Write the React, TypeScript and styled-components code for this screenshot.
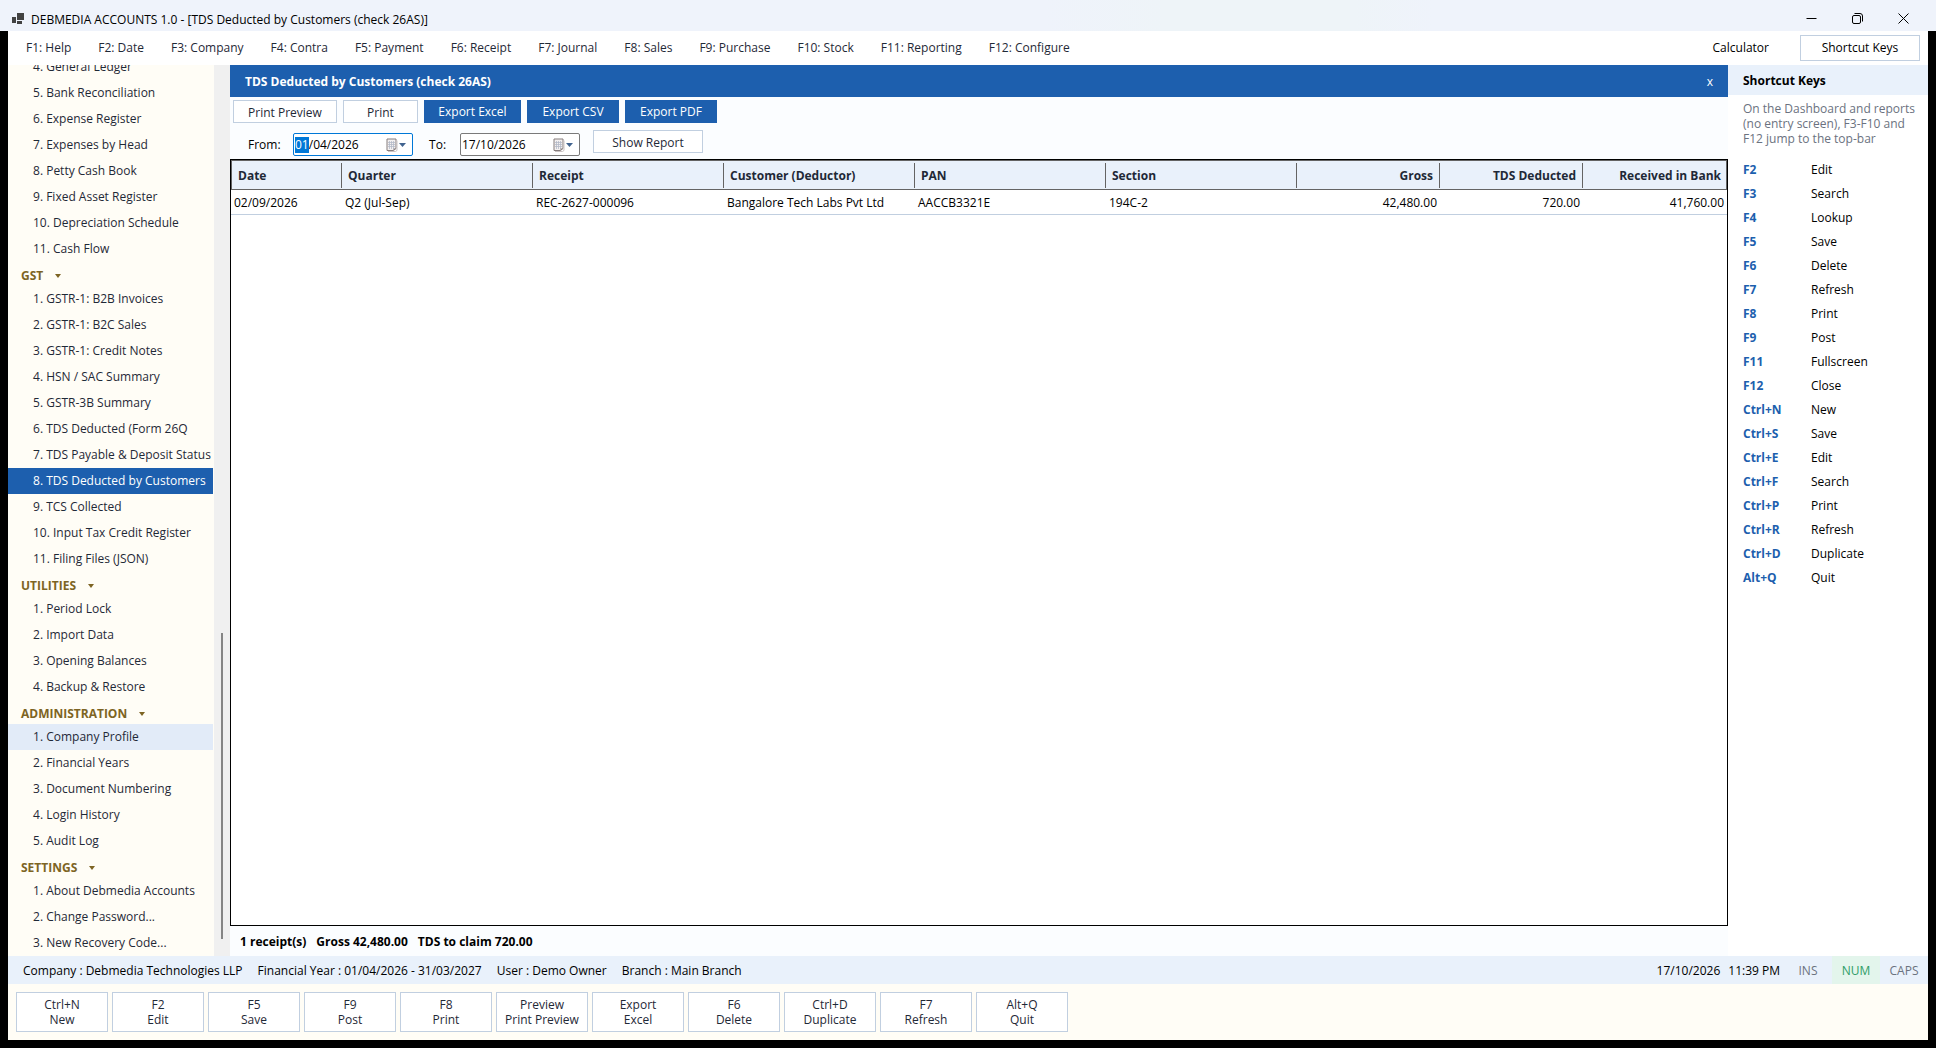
import React, { useState } from "react";
import styled, { createGlobalStyle, css } from "styled-components";

const color = {
  blue: "#1d5fae",
  pale: "#e9f1fb",
  cream: "#fffdf6",
  line: "#c1cfe0",
  ink: "#1f2937",
  muted: "#6b7280",
  surface: "#fbfdff",
};

const Global = createGlobalStyle`
  * { box-sizing: border-box; }
  html, body, #root { height: 100%; margin: 0; }
  body {
    background: #000;
    color: #000;
    font: 12px/15px "Open Sans", "Noto Sans", sans-serif;
    overflow: hidden;
  }
  button, input { font: inherit; color: inherit; }
  button { cursor: pointer; }
`;

const Window = styled.div`
  display: flex;
  flex-direction: column;
  height: 100vh;
`;

const TitleBar = styled.header`
  display: flex;
  align-items: center;
  height: 31px;
  flex: none;
  padding: 6px 10px 0 12px;
  background: linear-gradient(90deg, #eff3fb 54%, #eef4f8 60%, #eef4f8 70%, #eff3fb 74%);
`;

const Title = styled.h1`
  margin: 0 auto 0 7px;
  padding-top: 2px;
  font-size: 12px;
  font-weight: 400;
`;

const WindowButton = styled.button`
  display: flex;
  align-items: center;
  justify-content: center;
  width: 46px;
  height: 24px;
  padding: 0;
  border: 0;
  background: none;
`;

const Client = styled.div`
  display: flex;
  flex-direction: column;
  flex: 1;
  min-height: 0;
  margin: 0 8px 8px;
  background: #fff;
`;

const MenuBar = styled.nav`
  display: flex;
  align-items: center;
  gap: 1px;
  height: 34px;
  flex: none;
  padding: 0 8px 0 5px;
`;

const MenuItem = styled.button`
  padding: 3px 13px 5px;
  border: 0;
  background: none;
  color: ${color.ink};
  white-space: nowrap;
`;

const Calculator = styled(MenuItem)`
  margin-left: auto;
  margin-right: 17px;
  color: #000;
`;

const KeysToggle = styled.button`
  width: 120px;
  height: 26px;
  padding: 0 0 2px;
  border: 1px solid ${color.line};
  background: #fff;
`;

const Body = styled.div`
  display: flex;
  flex: 1;
  min-height: 0;
`;

const Sidebar = styled.nav`
  display: flex;
  flex-direction: column;
  justify-content: flex-end;
  width: 206px;
  flex: none;
  overflow: hidden;
  background: ${color.cream};
`;

const GroupHeading = styled.button`
  display: flex;
  align-items: center;
  gap: 12px;
  height: 24px;
  flex: none;
  width: 100%;
  padding: 3px 13px 0;
  border: 0;
  background: none;
  color: #7d6423;
  font-weight: 700;
`;

const Caret = styled.span`
  border: 3px solid transparent;
  border-top: 4px solid currentColor;
  border-bottom: 0;
`;

const NavItem = styled.button<{ $state?: "active" | "hover" }>`
  display: block;
  height: 26px;
  flex: none;
  width: 205px;
  padding: 0 0 2px 25px;
  border: 0;
  background: none;
  color: ${color.ink};
  text-align: left;
  white-space: nowrap;
  ${({ $state }) => $state === "active" && css`background: ${color.blue}; color: #fff;`}
  ${({ $state }) => $state === "hover" && css`background: #e2ebf8;`}
`;

const ScrollTrack = styled.div`
  display: flex;
  flex-direction: column;
  align-items: center;
  justify-content: flex-end;
  width: 16px;
  flex: none;
  padding-bottom: 17px;
  background: #f0f0f0;
`;

const ScrollThumb = styled.div`
  width: 2px;
  height: 35%;
  background: #858585;
`;

const Main = styled.main`
  display: flex;
  flex-direction: column;
  flex: 1;
  min-width: 0;
  background: ${color.surface};
`;

const ReportHeader = styled.div`
  display: flex;
  align-items: center;
  justify-content: space-between;
  height: 32px;
  flex: none;
  padding: 0 13px 0 15px;
  background: ${color.blue};
  color: #fff;
`;

const Heading = styled.h2`
  margin: 0;
  font-size: 12px;
  font-weight: 700;
`;

const CloseReport = styled.button`
  padding: 2px;
  border: 0;
  background: none;
`;

const Toolbar = styled.div`
  display: flex;
  gap: 6px;
  padding: 3px;
`;

const ToolButton = styled.button<{ $primary?: boolean; $width: number }>`
  width: ${({ $width }) => $width}px;
  height: 23px;
  padding: ${({ $primary }) => ($primary ? "0" : "1px 0 0")};
  border: 1px solid ${({ $primary }) => ($primary ? color.blue : color.line)};
  background: ${({ $primary }) => ($primary ? color.blue : "#fff")};
  color: ${({ $primary }) => ($primary ? "#fff" : color.ink)};
  white-space: nowrap;
`;

const Filters = styled.form`
  display: flex;
  align-items: flex-start;
  gap: 13px;
  padding: 4px 18px 3px;
`;

const FilterLabel = styled.label`
  display: flex;
  align-items: center;
  padding-top: 3px;
`;

const LabelText = styled.span<{ $width: number }>`
  width: ${({ $width }) => $width}px;
`;

const DateBox = styled.span<{ $focused?: boolean }>`
  display: flex;
  align-items: center;
  width: 120px;
  height: 23px;
  padding: 0 6px 0 1px;
  border: 1px solid ${({ $focused }) => ($focused ? "#0078d7" : "#7a7a7a")};
  border-radius: 2px;
  background: #fff;
`;

const DateSelection = styled.span`
  padding: 0 0 1px;
  background: #0078d7;
  color: #fff;
`;

const DateInput = styled.input`
  flex: 1;
  min-width: 0;
  padding: 0;
  border: 0;
  outline: 0;
  background: none;
`;

const TableFrame = styled.div`
  flex: 1;
  min-height: 0;
  border: 1px solid #000;
  background: #fff;
`;

const Table = styled.table`
  width: 100%;
  border-collapse: separate;
  border-spacing: 0;
  table-layout: fixed;
`;

const HeadCell = styled.th<{ $right?: boolean }>`
  height: 30px;
  padding: 0;
  border-top: 1px solid #646464;
  border-bottom: 1px solid #646464;
  background: ${color.pale};
  color: ${color.ink};
  font-weight: 700;
  text-align: ${({ $right }) => ($right ? "right" : "left")};
  &:first-child { border-left: 1px solid #646464; }
  &:last-child { border-right: 1px solid #646464; }
`;

const HeadText = styled.div`
  margin: 2px 0 1px;
  padding: 5px 6px;
  border-right: 1px solid #646464;
  th:last-child > & { border-right-color: transparent; padding-right: 4px; }
`;

const Cell = styled.td<{ $right?: boolean }>`
  height: 25px;
  padding: 0 3px;
  border-bottom: 1px solid ${color.line};
  text-align: ${({ $right }) => ($right ? "right" : "left")};
  white-space: nowrap;
`;

const Totals = styled.div`
  display: flex;
  align-items: center;
  gap: 10px;
  height: 30px;
  flex: none;
  padding: 0 10px;
  font-weight: 700;
`;

const KeysPanel = styled.aside`
  width: 200px;
  flex: none;
  background: #fff;
`;

const KeysHeading = styled(Heading)`
  height: 30px;
  padding: 8px 15px;
  background: ${color.pale};
`;

const Note = styled.p`
  margin: 6px 10px 16px 15px;
  color: ${color.muted};
`;

const KeyList = styled.dl`
  display: grid;
  grid-template-columns: 68px 1fr;
  grid-auto-rows: 24px;
  margin: 0;
  padding-left: 15px;
`;

const KeyName = styled.dt`
  color: ${color.blue};
  font-weight: 700;
`;

const KeyAction = styled.dd`
  margin: 0;
`;

const StatusBar = styled.footer`
  display: flex;
  align-items: center;
  gap: 15px;
  height: 28px;
  flex: none;
  padding-left: 15px;
  background: ${color.pale};
`;

const StatusRight = styled.div`
  display: flex;
  align-items: center;
  height: 100%;
  margin-left: auto;
`;

const Clock = styled.div`
  display: flex;
  gap: 8px;
  margin-right: 4px;
`;

const Lock = styled.span<{ $on?: boolean }>`
  display: flex;
  align-items: center;
  justify-content: center;
  width: 48px;
  height: 100%;
  background: ${({ $on }) => ($on ? "#e3f5ec" : "transparent")};
  color: ${({ $on }) => ($on ? "#2f9e68" : color.muted)};
`;

const ActionBar = styled.div`
  display: flex;
  gap: 4px;
  flex: none;
  padding: 8px;
  background: ${color.cream};
`;

const ActionButton = styled.button`
  display: flex;
  flex-direction: column;
  align-items: center;
  justify-content: center;
  width: 92px;
  height: 40px;
  padding: 0;
  border: 1px solid ${color.line};
  background: #fff;
  color: ${color.ink};
  white-space: nowrap;
`;

const AppIcon = () => (
  <svg width="12" height="12" viewBox="0 0 12 12" fill="#424242" aria-hidden="true">
    <rect x="0" y="4" width="4" height="6" />
    <rect x="5" y="0" width="7" height="7" />
    <rect x="5" y="8" width="5" height="3" />
  </svg>
);

const MinimizeIcon = () => (
  <svg width="11" height="11" viewBox="0 0 11 11" fill="none" stroke="#000" aria-hidden="true">
    <path d="M0.5 5.5h10" />
  </svg>
);

const RestoreIcon = () => (
  <svg width="11" height="11" viewBox="0 0 11 11" fill="none" stroke="#000" aria-hidden="true">
    <rect x="0.5" y="2.5" width="8" height="8" rx="1.5" />
    <path d="M2.5 0.5h5.500a2.500 2.500 0 0 1 2.500 2.500v5.500" />
  </svg>
);

const CloseIcon = () => (
  <svg width="11" height="11" viewBox="0 0 11 11" fill="none" stroke="#000" aria-hidden="true">
    <path d="M0.5 0.5l10 10M10.5 0.5l-10 10" />
  </svg>
);

const CalendarIcon = () => (
  <svg width="21" height="14" viewBox="0 0 21 14" aria-hidden="true">
    <path d="M2 1h9v9.500l-2.500 2h-6.500z" fill="#f3f0f0" stroke="#857c7d" />
    <path d="M3 4.500h7M3 6.500h7M3 8.500h7M4.500 3v8M6.500 3v8M8.500 3v8" stroke="#b4bac8" strokeWidth="0.8" />
    <path d="M8.500 12.500v-2h2.500z" fill="#857c7d" />
    <path d="M12 2.500v10l-1.500 1h-7.500" fill="none" stroke="#c9c2c2" />
    <path d="M14 5h7l-3.500 4z" fill="#41638f" />
  </svg>
);

const menu = [
  "F1: Help", "F2: Date", "F3: Company", "F4: Contra", "F5: Payment", "F6: Receipt",
  "F7: Journal", "F8: Sales", "F9: Purchase", "F10: Stock", "F11: Reporting", "F12: Configure",
];

const groups: { name?: string; first: number; items: string[] }[] = [
  {
    first: 4,
    items: [
      "General Ledger", "Bank Reconciliation", "Expense Register", "Expenses by Head",
      "Petty Cash Book", "Fixed Asset Register", "Depreciation Schedule", "Cash Flow",
    ],
  },
  {
    name: "GST",
    first: 1,
    items: [
      "GSTR-1: B2B Invoices", "GSTR-1: B2C Sales", "GSTR-1: Credit Notes", "HSN / SAC Summary",
      "GSTR-3B Summary", "TDS Deducted (Form 26Q", "TDS Payable & Deposit Status",
      "TDS Deducted by Customers", "TCS Collected", "Input Tax Credit Register", "Filing Files (JSON)",
    ],
  },
  { name: "UTILITIES", first: 1, items: ["Period Lock", "Import Data", "Opening Balances", "Backup & Restore"] },
  {
    name: "ADMINISTRATION",
    first: 1,
    items: ["Company Profile", "Financial Years", "Document Numbering", "Login History", "Audit Log"],
  },
  { name: "SETTINGS", first: 1, items: ["About Debmedia Accounts", "Change Password...", "New Recovery Code..."] },
];

const columns = [
  { title: "Date", width: 111 },
  { title: "Quarter", width: 191 },
  { title: "Receipt", width: 191 },
  { title: "Customer (Deductor)", width: 191 },
  { title: "PAN", width: 191 },
  { title: "Section", width: 191 },
  { title: "Gross", width: 143, right: true },
  { title: "TDS Deducted", width: 143, right: true },
  { title: "Received in Bank", width: 144, right: true },
];

const rows = [
  ["02/09/2026", "Q2 (Jul-Sep)", "REC-2627-000096", "Bangalore Tech Labs Pvt Ltd", "AACCB3321E", "194C-2", "42,480.00", "720.00", "41,760.00"],
];

const shortcuts = [
  ["F2", "Edit"], ["F3", "Search"], ["F4", "Lookup"], ["F5", "Save"], ["F6", "Delete"], ["F7", "Refresh"],
  ["F8", "Print"], ["F9", "Post"], ["F11", "Fullscreen"], ["F12", "Close"], ["Ctrl+N", "New"],
  ["Ctrl+S", "Save"], ["Ctrl+E", "Edit"], ["Ctrl+F", "Search"], ["Ctrl+P", "Print"], ["Ctrl+R", "Refresh"],
  ["Ctrl+D", "Duplicate"], ["Alt+Q", "Quit"],
];

const actions = [
  ["Ctrl+N", "New"], ["F2", "Edit"], ["F5", "Save"], ["F9", "Post"], ["F8", "Print"],
  ["Preview", "Print Preview"], ["Export", "Excel"], ["F6", "Delete"], ["Ctrl+D", "Duplicate"],
  ["F7", "Refresh"], ["Alt+Q", "Quit"],
];

export default function App() {
  const [from, setFrom] = useState("/04/2026");
  const [to, setTo] = useState("17/10/2026");
  const total = columns.reduce((sum, c) => sum + c.width, 0);

  return (
    <>
      <Global />
      <Window>
        <TitleBar>
          <AppIcon />
          <Title>DEBMEDIA ACCOUNTS 1.0 - [TDS Deducted by Customers (check 26AS)]</Title>
          <WindowButton aria-label="Minimize"><MinimizeIcon /></WindowButton>
          <WindowButton aria-label="Restore"><RestoreIcon /></WindowButton>
          <WindowButton aria-label="Close"><CloseIcon /></WindowButton>
        </TitleBar>
        <Client>
          <MenuBar>
            {menu.map((m) => <MenuItem key={m}>{m}</MenuItem>)}
            <Calculator>Calculator</Calculator>
            <KeysToggle>Shortcut Keys</KeysToggle>
          </MenuBar>
          <Body>
            <Sidebar>
              {groups.map((g) => (
                <React.Fragment key={g.name ?? "reports"}>
                  {g.name && <GroupHeading>{g.name}<Caret /></GroupHeading>}
                  {g.items.map((item, i) => (
                    <NavItem
                      key={item}
                      $state={item === "TDS Deducted by Customers" ? "active" : item === "Company Profile" ? "hover" : undefined}
                    >
                      {g.first + i}. {item}
                    </NavItem>
                  ))}
                </React.Fragment>
              ))}
            </Sidebar>
            <ScrollTrack><ScrollThumb /></ScrollTrack>
            <Main>
              <ReportHeader>
                <Heading>TDS Deducted by Customers (check 26AS)</Heading>
                <CloseReport aria-label="Close report">x</CloseReport>
              </ReportHeader>
              <Toolbar>
                <ToolButton $width={104}>Print Preview</ToolButton>
                <ToolButton $width={75}>Print</ToolButton>
                <ToolButton $width={97} $primary>Export Excel</ToolButton>
                <ToolButton $width={92} $primary>Export CSV</ToolButton>
                <ToolButton $width={92} $primary>Export PDF</ToolButton>
              </Toolbar>
              <Filters onSubmit={(e) => e.preventDefault()}>
                <FilterLabel>
                  <LabelText $width={45}>From:</LabelText>
                  <DateBox $focused>
                    <DateSelection>01</DateSelection>
                    <DateInput value={from} onChange={(e) => setFrom(e.target.value)} />
                    <CalendarIcon />
                  </DateBox>
                </FilterLabel>
                <FilterLabel>
                  <LabelText $width={34}>&nbsp;To:</LabelText>
                  <DateBox>
                    <DateInput value={to} onChange={(e) => setTo(e.target.value)} />
                    <CalendarIcon />
                  </DateBox>
                </FilterLabel>
                <ToolButton $width={110}>Show Report</ToolButton>
              </Filters>
              <TableFrame>
                <Table>
                  <colgroup>
                    {columns.map((c) => <col key={c.title} style={{ width: `${(c.width / total) * 100}%` }} />)}
                  </colgroup>
                  <thead>
                    <tr>
                      {columns.map((c) => (
                        <HeadCell key={c.title} $right={c.right}><HeadText>{c.title}</HeadText></HeadCell>
                      ))}
                    </tr>
                  </thead>
                  <tbody>
                    {rows.map((r) => (
                      <tr key={r[2]}>
                        {r.map((v, i) => <Cell key={columns[i].title} $right={columns[i].right}>{v}</Cell>)}
                      </tr>
                    ))}
                  </tbody>
                </Table>
              </TableFrame>
              <Totals>
                <span>1 receipt(s)</span>
                <span>Gross 42,480.00</span>
                <span>TDS to claim 720.00</span>
              </Totals>
            </Main>
            <KeysPanel>
              <KeysHeading>Shortcut Keys</KeysHeading>
              <Note>On the Dashboard and reports (no entry screen), F3-F10 and F12 jump to the top-bar</Note>
              <KeyList>
                {shortcuts.map(([key, action]) => (
                  <React.Fragment key={key}>
                    <KeyName>{key}</KeyName>
                    <KeyAction>{action}</KeyAction>
                  </React.Fragment>
                ))}
              </KeyList>
            </KeysPanel>
          </Body>
          <StatusBar>
            <span>Company : Debmedia Technologies LLP</span>
            <span>Financial Year : 01/04/2026 - 31/03/2027</span>
            <span>User : Demo Owner</span>
            <span>Branch : Main Branch</span>
            <StatusRight>
              <Clock>
                <time>17/10/2026</time>
                <time>11:39 PM</time>
              </Clock>
              <Lock>INS</Lock>
              <Lock $on>NUM</Lock>
              <Lock>CAPS</Lock>
            </StatusRight>
          </StatusBar>
          <ActionBar>
            {actions.map(([key, label]) => (
              <ActionButton key={key}><span>{key}</span><span>{label}</span></ActionButton>
            ))}
          </ActionBar>
        </Client>
      </Window>
    </>
  );
}
